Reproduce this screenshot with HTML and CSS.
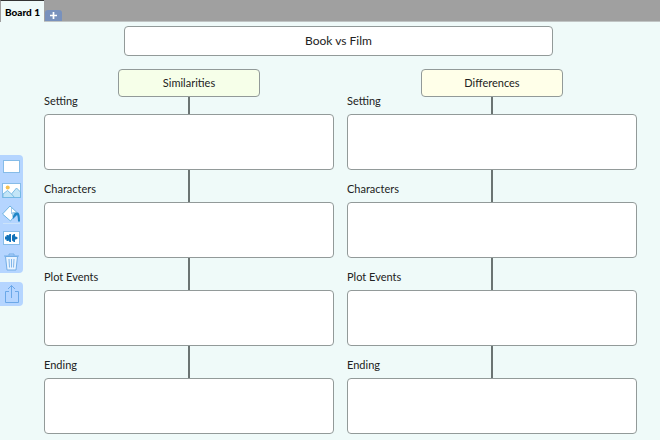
FILE: index.html
```html
<!DOCTYPE html>
<html lang="en">
  <head>
    <meta charset="UTF-8">
    <title>Book vs Film</title>
    <link rel="stylesheet" href="styles.css">
  </head>
  <body>
    <nav class="tabs">
      <button class="tab">Board 1</button>
      <button class="tab-add" aria-label="Add board">
        <svg width="9" height="9" viewBox="0 0 9 9"><path d="M4.500 1v7M1 4.500h7" stroke="#fff" stroke-width="1.700"/></svg>
      </button>
    </nav>
    <div class="workspace">
      <aside class="sidebar">
        <div class="tools">
          <button class="tool" aria-label="Box">
            <svg width="20" height="20" viewBox="0 0 20 20"><rect x="2.500" y="4.500" width="16" height="12" fill="#fff" stroke="#86bce8"/></svg>
          </button>
          <button class="tool" aria-label="Picture">
            <svg width="20" height="20" viewBox="0 0 20 20">
              <rect x="1.500" y="3.500" width="18" height="14" fill="#fff" stroke="#86bce8"/>
              <path d="M2 14L6.500 10.500l4 3.500 5-6 4 4v5.500H2z" fill="#c3e5f7" stroke="#6fb5e2" stroke-width="0.9"/>
              <path d="M10.500 14l3 3.500" stroke="#6fb5e2" stroke-width="0.9"/>
              <circle cx="6.700" cy="7.500" r="2" fill="#f6c04f"/>
            </svg>
          </button>
          <button class="tool" aria-label="Fill colour">
            <svg width="20" height="20" viewBox="0 0 20 20">
              <path d="M2 19.500h17" stroke="#cbe3fb"/>
              <path d="M9 2L16 8.500 9.500 17 1.500 10z" fill="#fff" stroke="#6fb5e2"/>
              <path d="M10.500 3.500V10" stroke="#86bce8" stroke-width="0.8"/>
              <path d="M11.500 8.500h5c1.500 0 2.500 2 2.500 9h-2c0-3-.5-6-1-6.500L12 15z" fill="#1f86c7"/>
              <path d="M11.500 8.500h2.500L11 14z" fill="#9fcdec"/>
            </svg>
          </button>
          <button class="tool" aria-label="Sound">
            <svg width="20" height="20" viewBox="0 0 20 20">
              <rect x="2.500" y="3.500" width="16" height="13" fill="#fff" stroke="#86bce8"/>
              <path d="M4 8.500h1.500V7h2v1l1-2H10v8H8.500l-1-2v1h-2v-1.500H4z" fill="#1272b8"/>
              <path d="M11 7.500l2-1.500h1v2.500h1l2 1.500-2 1.500h-1V14h-1l-2-1.500z" fill="#1272b8"/>
            </svg>
          </button>
          <button class="tool" aria-label="Delete">
            <svg width="20" height="20" viewBox="0 0 20 20">
              <path d="M4.500 4.500l1.500 13.500h9l1.500-13.500z" fill="#e9f4ff" stroke="#74aee6"/>
              <path d="M3 4h15M8 3.500V2h5v1.500" fill="none" stroke="#74aee6"/>
              <path d="M8 7l.5 8.500M10.500 7v8.500M13 7l-.5 8.500" stroke="#74aee6" stroke-width="0.9"/>
            </svg>
          </button>
        </div>
        <div class="tools">
          <button class="tool tool-share" aria-label="Share">
            <svg width="20" height="20" viewBox="0 0 20 20"><path d="M8 7.500H4.500v11h13v-11H14M10.500 14V1.500M7 5l3.500-3.500L14 5" fill="none" stroke="#6ba8e8"/></svg>
          </button>
        </div>
      </aside>
      <main class="board">
        <h1 class="box board-title">Book vs Film</h1>
        <div class="columns">
          <section class="column">
            <h2 class="box column-title similarities">Similarities</h2>
            <div class="field">
              <label for="sim-setting">Setting</label>
              <textarea class="box" id="sim-setting"></textarea>
            </div>
            <div class="field">
              <label for="sim-characters">Characters</label>
              <textarea class="box" id="sim-characters"></textarea>
            </div>
            <div class="field">
              <label for="sim-plot">Plot Events</label>
              <textarea class="box" id="sim-plot"></textarea>
            </div>
            <div class="field">
              <label for="sim-ending">Ending</label>
              <textarea class="box" id="sim-ending"></textarea>
            </div>
          </section>
          <section class="column">
            <h2 class="box column-title differences">Differences</h2>
            <div class="field">
              <label for="diff-setting">Setting</label>
              <textarea class="box" id="diff-setting"></textarea>
            </div>
            <div class="field">
              <label for="diff-characters">Characters</label>
              <textarea class="box" id="diff-characters"></textarea>
            </div>
            <div class="field">
              <label for="diff-plot">Plot Events</label>
              <textarea class="box" id="diff-plot"></textarea>
            </div>
            <div class="field">
              <label for="diff-ending">Ending</label>
              <textarea class="box" id="diff-ending"></textarea>
            </div>
          </section>
        </div>
      </main>
    </div>
  </body>
</html>
```
FILE: styles.css
```css
* {
  box-sizing: border-box;
}
body {
  margin: 0;
  background: #effaf9;
  color: #222;
  font-family: Lato, sans-serif;
  font-size: 11px;
  line-height: 18px;
}
button {
  border: 0;
  padding: 0;
  font: inherit;
  color: inherit;
}
svg {
  display: block;
}
.tabs {
  display: flex;
  align-items: flex-end;
  gap: 1px;
  height: 22px;
  border-bottom: 1px solid #c0c4c4;
  background: #a0a0a0;
}
.tab {
  height: 22px;
  margin-bottom: -1px;
  padding: 0 4px;
  border-top: 1px solid #333;
  border-left: 1px solid #a0a0a0;
  background: #effaf9;
  color: #000;
  font: 900 10px Lato, sans-serif;
}
.tab-add {
  display: flex;
  align-items: center;
  justify-content: center;
  width: 17px;
  height: 11px;
  border-radius: 3px 3px 0 0;
  background: #7891bd;
}
.workspace {
  display: flex;
}
.sidebar {
  display: flex;
  flex-direction: column;
  gap: 9px;
  width: 23px;
  padding-top: 133px;
}
.tools {
  display: flex;
  flex-direction: column;
  gap: 2px;
  padding-right: 1px;
  border-radius: 0 4px 4px 0;
  background: #b5d5ff;
}
.tool {
  display: flex;
  align-items: center;
  justify-content: center;
  height: 22px;
  background: none;
}
.tool-share {
  height: 24px;
}
.board {
  flex: 1;
  padding: 4px 23px 6px 21px;
}
.box {
  display: block;
  margin: 0;
  border: 1px solid #929a99;
  border-radius: 4px;
  background: #fff;
  font-size: 11px;
  font-weight: normal;
  text-align: center;
}
.board-title {
  margin: 0 84px 13px 80px;
  padding: 5px;
  font-size: 12px;
}
.columns {
  display: flex;
  gap: 13px;
}
/* the line behind the boxes joins them together */
.column {
  flex: 1;
  background: linear-gradient(#6b7473, #6b7473) center / 2px 100% no-repeat;
}
.column-title {
  width: 142px;
  margin: 0 auto -5px;
  padding: 4px;
}
.similarities {
  background: #f6ffe9;
}
.differences {
  background: #ffffe9;
}
.field label {
  display: inline-block;
  margin-bottom: 4px;
  vertical-align: top;
}
.field + .field {
  margin-top: 10px;
}
.field textarea {
  width: 100%;
  height: 56px;
  padding: 4px;
  resize: none;
  font-family: inherit;
  text-align: left;
}
```
